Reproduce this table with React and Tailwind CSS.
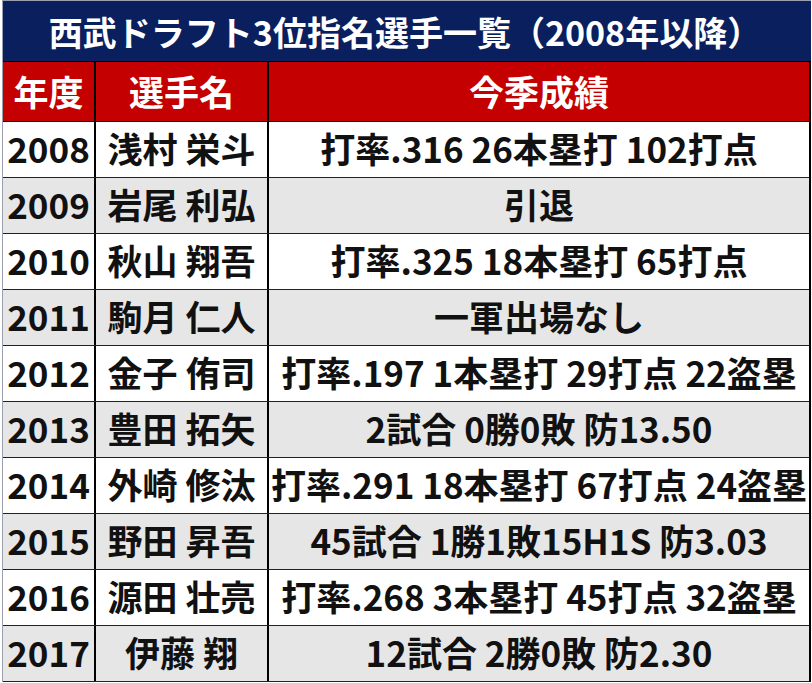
import React from 'react';

const rows = [
  { year: '2008', name: '浅村 栄斗', stats: '打率.316 26本塁打 102打点' },
  { year: '2009', name: '岩尾 利弘', stats: '引退' },
  { year: '2010', name: '秋山 翔吾', stats: '打率.325 18本塁打 65打点' },
  { year: '2011', name: '駒月 仁人', stats: '一軍出場なし' },
  { year: '2012', name: '金子 侑司', stats: '打率.197 1本塁打 29打点 22盗塁' },
  { year: '2013', name: '豊田 拓矢', stats: '2試合 0勝0敗 防13.50' },
  { year: '2014', name: '外崎 修汰', stats: '打率.291 18本塁打 67打点 24盗塁' },
  { year: '2015', name: '野田 昇吾', stats: '45試合 1勝1敗15H1S 防3.03' },
  { year: '2016', name: '源田 壮亮', stats: '打率.268 3本塁打 45打点 32盗塁' },
  { year: '2017', name: '伊藤 翔', stats: '12試合 2勝0敗 防2.30' },
];

export default function App() {
  return (
    <div className="w-[812px] h-[683px] bg-white font-['Noto_Sans_CJK_JP',sans-serif] font-bold overflow-hidden">
      <div className="ml-[2px] mr-[1px] border-t border-l border-[#9aa0b0]">
        {/* title bar */}
        <div className="h-[61px] bg-[#0a1f5e] text-white text-[34px] flex items-center justify-center border-b border-black pr-[4px]">
          西武ドラフト3位指名選手一覧（2008年以降）
        </div>

        <div className="border-r-2 border-black">
          {/* header */}
          <div className="grid grid-cols-[93px_173px_1fr] h-[60px] bg-[#c40000] text-white text-[35px] border-b border-black">
            <div className="flex items-center justify-center border-r-2 border-black">年度</div>
            <div className="flex items-center justify-center border-r-2 border-black">選手名</div>
            <div className="flex items-center justify-center">今季成績</div>
          </div>

          {rows.map((r, i) => (
            <div
              key={r.year}
              className={`grid grid-cols-[93px_173px_1fr] h-[56px] text-[35px] text-[#111] border-b border-[#222] ${i % 2 === 0 ? 'bg-white' : 'bg-[#e6e6e6]'}`}
            >
              <div className="flex items-center justify-center border-r-2 border-black pb-[2px]">{r.year}</div>
              <div className="flex items-center justify-center border-r-2 border-black pb-[2px]">{r.name}</div>
              <div className="flex items-center justify-center whitespace-nowrap pb-[2px]">{r.stats}</div>
            </div>
          ))}
        </div>
      </div>
    </div>
  );
}
